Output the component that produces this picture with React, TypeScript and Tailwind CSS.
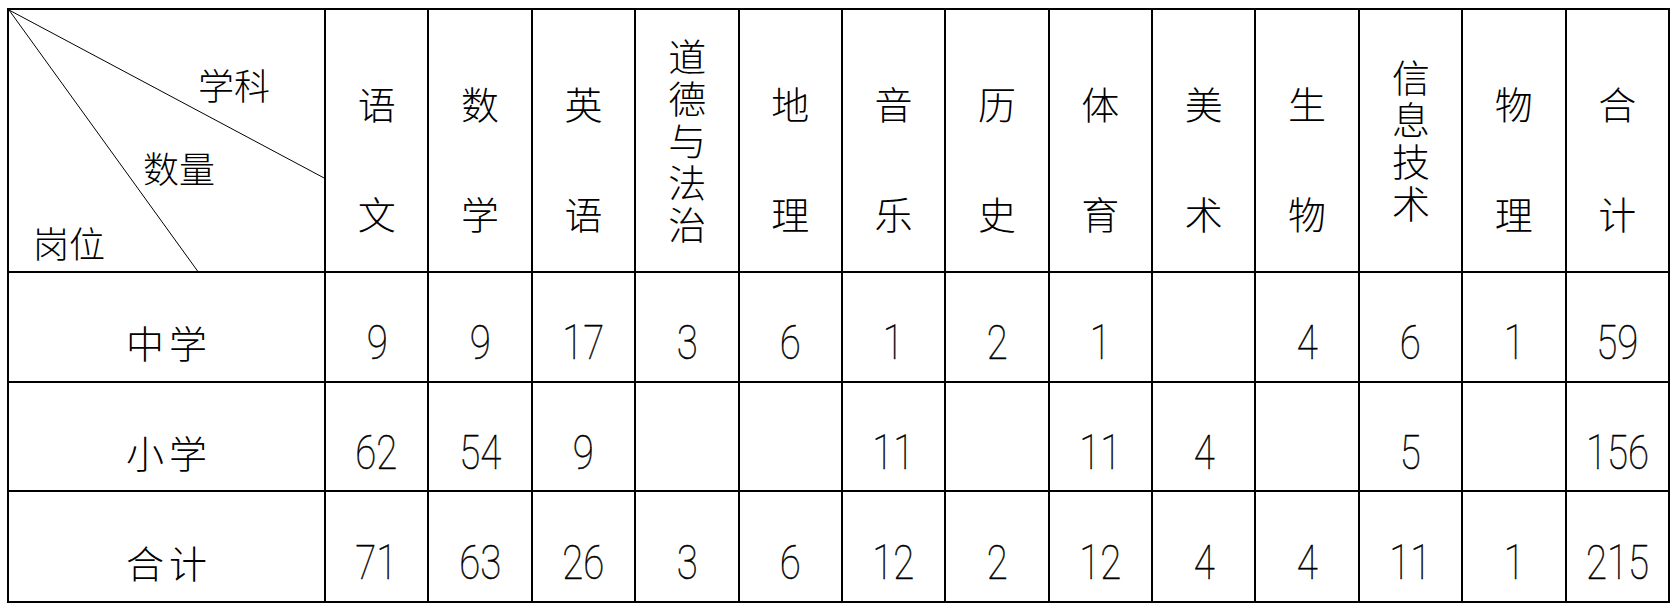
const cjk = "font-['Noto_Sans_CJK_SC',sans-serif] font-light";
const num = "font-['Roboto','Liberation_Sans',sans-serif] font-thin [-webkit-text-stroke:0.5px_black]";

const subjects: string[][] = [
  ["语", "文"],
  ["数", "学"],
  ["英", "语"],
  ["道德与法治"],
  ["地", "理"],
  ["音", "乐"],
  ["历", "史"],
  ["体", "育"],
  ["美", "术"],
  ["生", "物"],
  ["信息技术"],
  ["物", "理"],
  ["合", "计"],
];

const rows: { label: string; values: string[]; h: string }[] = [
  { label: "中学", values: ["9", "9", "17", "3", "6", "1", "2", "1", "", "4", "6", "1", "59"], h: "h-[110px]" },
  { label: "小学", values: ["62", "54", "9", "", "", "11", "", "11", "4", "", "5", "", "156"], h: "h-[109px]" },
  { label: "合计", values: ["71", "63", "26", "3", "6", "12", "2", "12", "4", "4", "11", "1", "215"], h: "h-[111px]" },
];

function HeaderCell({ parts }: { parts: string[] }) {
  if (parts.length === 1) {
    // stacked vertical text
    return (
      <td className="border-2 border-black p-0 align-middle">
        <div className="flex justify-center pt-[4px]">
          <span className={`${cjk} text-[38px] leading-[40px] tracking-[4px] text-black [writing-mode:vertical-rl]`}>
            {parts[0]}
          </span>
        </div>
      </td>
    );
  }
  return (
    <td className="border-2 border-black p-0 pt-[34px] align-middle">
      <div className={`${cjk} flex flex-col items-center gap-[70px] text-[38px] leading-[40px] text-black`}>
        <span>{parts[0]}</span>
        <span>{parts[1]}</span>
      </div>
    </td>
  );
}

export default function App() {
  return (
    <div className="min-h-[614px] w-[1680px] bg-white pl-[7px] pt-[8px]">
      <table className="w-[1663px] table-fixed border-collapse border-2 border-black">
        <colgroup>
          <col className="w-[317px]" />
          {subjects.map((_, i) => (
            <col key={i} />
          ))}
        </colgroup>
        <tbody>
          <tr className="h-[263px]">
            <td className="relative border-2 border-black p-0">
              <svg className="absolute left-0 top-0" width="317" height="263" viewBox="0 0 317 263">
                <line x1="0" y1="0" x2="317" y2="169" stroke="black" strokeWidth="1" />
                <line x1="0" y1="0" x2="190" y2="263" stroke="black" strokeWidth="1" />
              </svg>
              <span className={`${cjk} absolute left-[189px] top-[56px] text-[36px] leading-[36px] text-black`}>学科</span>
              <span className={`${cjk} absolute left-[134px] top-[139px] text-[36px] leading-[36px] text-black`}>数量</span>
              <span className={`${cjk} absolute left-[24px] top-[214px] text-[36px] leading-[36px] text-black`}>岗位</span>
            </td>
            {subjects.map((s, i) => (
              <HeaderCell key={i} parts={s} />
            ))}
          </tr>
          {rows.map((r) => (
            <tr key={r.label} className={r.h}>
              <td className="border-2 border-black p-0 pt-[32px] text-center align-middle">
                <span className={`${cjk} pl-[5px] text-[38px] leading-[40px] tracking-[5px] text-black`}>{r.label}</span>
              </td>
              {r.values.map((v, i) => (
                <td key={i} className="border-2 border-black p-0 pt-[32px] text-center align-middle">
                  <span className={`${num} inline-block scale-x-[0.8] text-[48px] leading-none text-black`}>{v}</span>
                </td>
              ))}
            </tr>
          ))}
        </tbody>
      </table>
    </div>
  );
}
